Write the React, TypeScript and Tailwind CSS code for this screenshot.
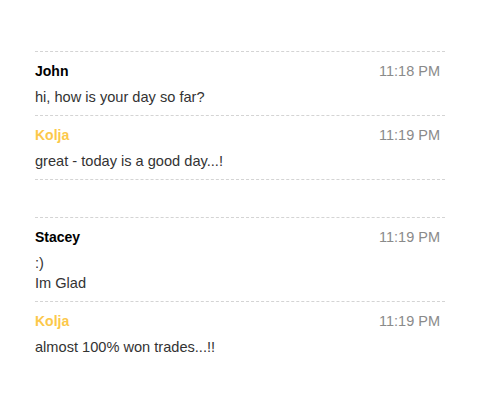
import React from "react";

type Msg = { name: string; time: string; lines: string[]; me?: boolean };

const groups: Msg[][] = [
  [
    { name: "John", time: "11:18 PM", lines: ["hi, how is your day so far?"] },
    { name: "Kolja", time: "11:19 PM", lines: ["great - today is a good day...!"], me: true },
  ],
  [
    { name: "Stacey", time: "11:19 PM", lines: [":)", "Im Glad"] },
    { name: "Kolja", time: "11:19 PM", lines: ["almost 100% won trades...!!"], me: true },
  ],
];

export default function App() {
  return (
    <div
      className="w-[499px] h-[408px] bg-white pt-[51px] pl-[35px]"
      style={{ fontFamily: '"Liberation Sans", Arial, sans-serif' }}
    >
      <div className="w-[410px] flex flex-col gap-[37px]">
        {groups.map((g, gi) => (
          <ul key={gi} className={gi === 0 ? "border-b border-dashed border-[#d4d4d4]" : ""}>
            {g.map((m, i) => (
              <li key={i} className="border-t border-dashed border-[#d4d4d4] pt-[9px] pb-[8px]">
                <div className="flex justify-between items-baseline leading-[20px]">
                  <span className={"text-[14px] font-bold " + (m.me ? "text-[#fcc84a]" : "text-black")}>{m.name}</span>
                  <span className="text-[14.5px] text-[#8a8a8a] pr-[5px]">{m.time}</span>
                </div>
                <div className="mt-[6px] text-[14.6px] leading-[20px] text-[#333]">
                  {m.lines.map((l, li) => (
                    <div key={li}>{l}</div>
                  ))}
                </div>
              </li>
            ))}
          </ul>
        ))}
      </div>
    </div>
  );
}
